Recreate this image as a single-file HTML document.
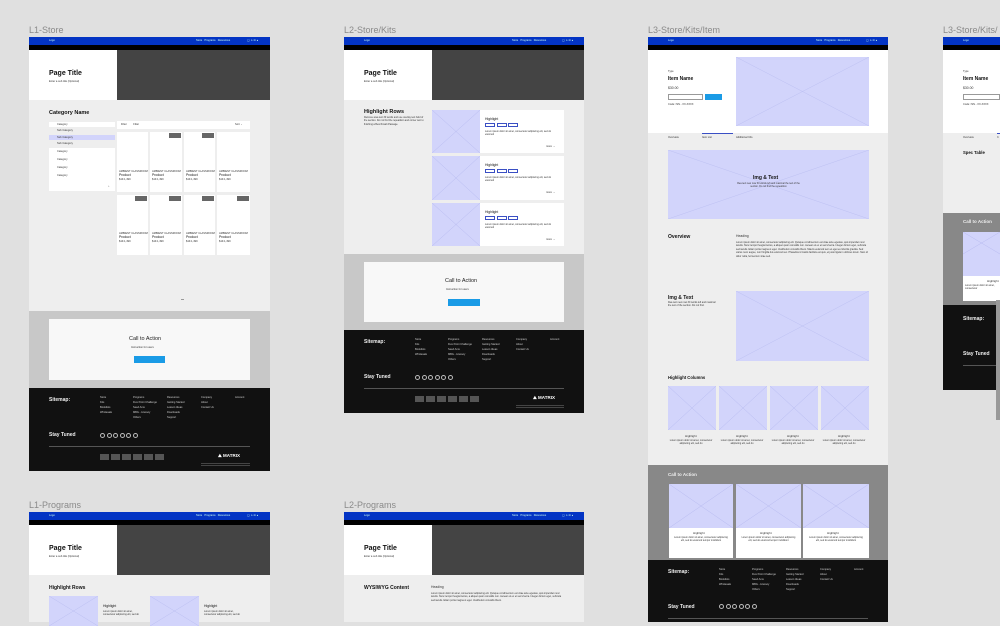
<!DOCTYPE html>
<html><head><meta charset="utf-8"><style>
*{margin:0;padding:0;box-sizing:border-box}
body{width:1000px;height:622px;overflow:hidden;background:#e0e0e0;position:relative;font-family:"Liberation Sans",sans-serif}
div,span{position:absolute}
.lbl{font-size:9px;color:#8a8a8a;white-space:nowrap}
.blue{background:#0334c4;height:8px}
.blk{background:#000;height:5px}
.dark{background:#444}
.w{background:#fff}
.lt{background:#eee}
.img{background:#d2d4fb;overflow:hidden}
.img svg{position:absolute;left:0;top:0;width:100%;height:100%}
.t{white-space:nowrap;color:#111}
.s{font-size:2.6px;color:#333;white-space:nowrap}
.p{font-size:2.4px;color:#333;line-height:3.4px;white-space:normal}
.f{font-size:2.6px;color:#ccc;white-space:nowrap;line-height:5px}
.nav{font-size:2.6px;color:#cfe;white-space:nowrap}
.circ{width:5px;height:5px;border:0.6px solid #bbb;border-radius:50%;top:0}
.tag{width:10px;height:4px;border:.5px solid #3a4fc4;top:13px}
</style></head><body>

<div class="lbl" style="left:29px;top:25px">L1-Store</div>
<div class="lbl" style="left:344px;top:25px">L2-Store/Kits</div>
<div class="lbl" style="left:648px;top:25px">L3-Store/Kits/Item</div>
<div class="lbl" style="left:943px;top:25px">L3-Store/Kits/</div>
<div class="lbl" style="left:29px;top:500px">L1-Programs</div>
<div class="lbl" style="left:344px;top:500px">L2-Programs</div>

<!-- L1-Store -->
<div class="blue" style="left:29px;top:37px;width:241px"><span class="nav" style="left:20px;top:2px">Logo</span><span class="nav" style="left:167px;top:2px">Store &nbsp; Programs &nbsp; Resources</span><span class="nav" style="left:218px;top:2px">◯ ♙ ⊟ ●</span></div>
<div class="blk" style="left:29px;top:45px;width:241px"></div>
<div class="w" style="left:29px;top:50px;width:88px;height:50px"><span class="t" style="left:20px;top:20px;font-size:7px;font-weight:bold">Page Title</span><span class="s" style="left:20px;top:30px">Enter a sub title (Optional)</span></div>
<div class="dark" style="left:117px;top:50px;width:153px;height:50px"></div>
<div class="lt" style="left:29px;top:100px;width:241px;height:211px">
 <span class="t" style="left:20px;top:10px;font-size:5.5px;font-weight:bold">Category Name</span>
 <div class="w" style="left:20px;top:22px;width:66px;height:5px"><span class="s" style="left:8px;top:1px">Category</span></div>
 <div class="s" style="left:28px;top:29px">Sub Category</div>
 <div style="left:20px;top:35px;width:66px;height:5px;background:#d2d4fb"><span class="s" style="left:8px;top:1px">Sub Category</span></div>
 <div class="s" style="left:28px;top:42px">Sub Category</div>
 <div class="w" style="left:20px;top:48px;width:66px;height:36px"><span class="s" style="left:8px;top:2px">Category</span><span class="s" style="left:8px;top:10px">Category</span><span class="s" style="left:8px;top:18px">Category</span><span class="s" style="left:8px;top:26px">Category</span></div>
 <div class="w" style="left:20px;top:84px;width:66px;height:7px"><span class="s" style="left:59px;top:1px">⌕</span></div>
 <div class="w" style="left:88px;top:21px;width:133px;height:8px"><span class="s" style="left:4px;top:2px">Filter &nbsp; &nbsp; &nbsp; &nbsp; Filter</span><span class="s" style="left:118px;top:2px">Sort ⌄</span></div>
 <div class="w" style="left:88px;top:32px;width:31px;height:60px"></div>
 <div class="w" style="left:121px;top:32px;width:32px;height:60px"><div style="left:19px;top:1px;width:12px;height:5px;background:#666"></div></div>
 <div class="w" style="left:155px;top:32px;width:31px;height:60px"><div style="left:18px;top:1px;width:12px;height:5px;background:#666"></div></div>
 <div class="w" style="left:188px;top:32px;width:33px;height:60px"></div>
 <div class="w" style="left:88px;top:95px;width:31px;height:60px"><div style="left:18px;top:1px;width:12px;height:5px;background:#666"></div></div>
 <div class="w" style="left:121px;top:95px;width:32px;height:60px"><div style="left:19px;top:1px;width:12px;height:5px;background:#666"></div></div>
 <div class="w" style="left:155px;top:95px;width:31px;height:60px"><div style="left:18px;top:1px;width:12px;height:5px;background:#666"></div></div>
 <div class="w" style="left:188px;top:95px;width:33px;height:60px"><div style="left:20px;top:1px;width:12px;height:5px;background:#666"></div></div>
 <div class="s" style="left:90px;top:70px">AMBIENT CLASSROOM</div><div class="t" style="left:90px;top:73px;font-size:3.4px">Product</div><div class="s" style="left:90px;top:78px">$19.1,499</div>
 <div class="s" style="left:123px;top:70px">AMBIENT CLASSROOM</div><div class="t" style="left:123px;top:73px;font-size:3.4px">Product</div><div class="s" style="left:123px;top:78px">$19.1,499</div>
 <div class="s" style="left:157px;top:70px">AMBIENT CLASSROOM</div><div class="t" style="left:157px;top:73px;font-size:3.4px">Product</div><div class="s" style="left:157px;top:78px">$19.1,499</div>
 <div class="s" style="left:190px;top:70px">AMBIENT CLASSROOM</div><div class="t" style="left:190px;top:73px;font-size:3.4px">Product</div><div class="s" style="left:190px;top:78px">$19.1,499</div>
 <div class="s" style="left:90px;top:132px">AMBIENT CLASSROOM</div><div class="t" style="left:90px;top:135px;font-size:3.4px">Product</div><div class="s" style="left:90px;top:140px">$19.1,499</div>
 <div class="s" style="left:123px;top:132px">AMBIENT CLASSROOM</div><div class="t" style="left:123px;top:135px;font-size:3.4px">Product</div><div class="s" style="left:123px;top:140px">$19.1,499</div>
 <div class="s" style="left:157px;top:132px">AMBIENT CLASSROOM</div><div class="t" style="left:157px;top:135px;font-size:3.4px">Product</div><div class="s" style="left:157px;top:140px">$19.1,499</div>
 <div class="s" style="left:190px;top:132px">AMBIENT CLASSROOM</div><div class="t" style="left:190px;top:135px;font-size:3.4px">Product</div><div class="s" style="left:190px;top:140px">$19.1,499</div>
 <div style="left:152px;top:199px;width:3px;height:1px;background:#999"></div>
</div>
<div style="left:29px;top:311px;width:241px;height:77px;background:#c8c8c8">
 <div style="left:20px;top:8px;width:201px;height:61px;background:#f8f8f8">
  <span class="t" style="left:80px;top:17px;font-size:5.5px;color:#222">Call to Action</span>
  <span class="s" style="left:82px;top:27px">Instruction for users</span>
  <div style="left:85px;top:37px;width:31px;height:7px;background:#1a9be6"></div>
 </div>
</div>
<div style="left:29px;top:388px;width:241px;height:83px;background:#111">
 <span class="t" style="left:20px;top:9px;font-size:5px;font-weight:bold;color:#eee">Sitemap:</span>
 <div class="f" style="left:71px;top:7px">Store<br>Kits<br>Booklists<br>Wholesale</div>
 <div class="f" style="left:104px;top:7px">Programs<br>Five Point Challenge<br>Seed Ams<br>MBG - Literacy<br>Others</div>
 <div class="f" style="left:138px;top:7px">Resources<br>Getting Started<br>Lesson Ideas<br>Downloads<br>Support</div>
 <div class="f" style="left:172px;top:7px">Company<br>About<br>Contact Us</div>
 <div class="f" style="left:206px;top:7px">Account</div>
 <span class="t" style="left:20px;top:44px;font-size:5px;font-weight:bold;color:#eee">Stay Tuned</span>
 <div style="left:71px;top:45px;width:45px;height:6px"><span class="circ" style="left:0"></span><span class="circ" style="left:6.5px"></span><span class="circ" style="left:13px"></span><span class="circ" style="left:19.5px"></span><span class="circ" style="left:26px"></span><span class="circ" style="left:32.5px"></span></div>
 <div style="left:20px;top:58px;width:201px;height:0.6px;background:#555"></div>
 <div style="left:71px;top:66px;width:66px;height:6px;background:repeating-linear-gradient(90deg,#555 0 9px,transparent 9px 11px)"></div>
 <span class="t" style="left:189px;top:65px;font-size:4.5px;font-weight:bold;color:#fff">⛰ MATRIX</span>
 <div style="left:172px;top:75px;width:49px;height:4px;background:repeating-linear-gradient(#444 0 1px,transparent 1px 2px)"></div>
</div>

<!-- L2-Store/Kits -->
<div class="blue" style="left:344px;top:37px;width:240px"><span class="nav" style="left:20px;top:2px">Logo</span><span class="nav" style="left:168px;top:2px">Store &nbsp; Programs &nbsp; Resources</span><span class="nav" style="left:218px;top:2px">◯ ♙ ⊟ ●</span></div>
<div class="blk" style="left:344px;top:45px;width:240px"></div>
<div class="w" style="left:344px;top:50px;width:88px;height:50px"><span class="t" style="left:20px;top:20px;font-size:7px;font-weight:bold">Page Title</span><span class="s" style="left:20px;top:30px">Enter a sub title (Optional)</span></div>
<div class="dark" style="left:432px;top:50px;width:152px;height:50px"></div>
<div class="lt" style="left:344px;top:100px;width:240px;height:154px">
 <span class="t" style="left:20px;top:9px;font-size:5.5px;font-weight:bold">Highlight Rows</span>
 <div class="p" style="left:20px;top:16px;width:62px">Remove area text 30 words and use overlay text bold of the section. Do not find the repeatition and corner text to finishing a Benchmark Passage.</div>
</div>
<div class="img" style="left:432px;top:110px;width:48px;height:43px"><svg viewBox="0 0 48 43" preserveAspectRatio="none"><path d="M0 0L48 43M48 0L0 43" stroke="#b8bbf0" stroke-width=".5"/></svg></div>
<div class="w" style="left:480px;top:110px;width:84px;height:43px"><span class="t" style="left:5px;top:7px;font-size:3.4px">Highlight</span><div class="tag" style="left:5px"></div><div class="tag" style="left:16.5px"></div><div class="tag" style="left:28px"></div><div class="p" style="left:5px;top:20px;width:72px">Lorem ipsum dolor sit amet, consectetur adipiscing elit, sed do eiusmod</div><span class="s" style="left:66px;top:35px">more →</span></div>
<div class="img" style="left:432px;top:156px;width:48px;height:44px"><svg viewBox="0 0 48 44" preserveAspectRatio="none"><path d="M0 0L48 44M48 0L0 44" stroke="#b8bbf0" stroke-width=".5"/></svg></div>
<div class="w" style="left:480px;top:156px;width:84px;height:44px"><span class="t" style="left:5px;top:7px;font-size:3.4px">Highlight</span><div class="tag" style="left:5px"></div><div class="tag" style="left:16.5px"></div><div class="tag" style="left:28px"></div><div class="p" style="left:5px;top:20px;width:72px">Lorem ipsum dolor sit amet, consectetur adipiscing elit, sed do eiusmod</div><span class="s" style="left:66px;top:35px">more →</span></div>
<div class="img" style="left:432px;top:203px;width:48px;height:43px"><svg viewBox="0 0 48 43" preserveAspectRatio="none"><path d="M0 0L48 43M48 0L0 43" stroke="#b8bbf0" stroke-width=".5"/></svg></div>
<div class="w" style="left:480px;top:203px;width:84px;height:43px"><span class="t" style="left:5px;top:7px;font-size:3.4px">Highlight</span><div class="tag" style="left:5px"></div><div class="tag" style="left:16.5px"></div><div class="tag" style="left:28px"></div><div class="p" style="left:5px;top:20px;width:72px">Lorem ipsum dolor sit amet, consectetur adipiscing elit, sed do eiusmod</div><span class="s" style="left:66px;top:35px">more →</span></div>
<div style="left:344px;top:254px;width:240px;height:76px;background:#c8c8c8">
 <div style="left:20px;top:8px;width:200px;height:60px;background:#f8f8f8">
  <span class="t" style="left:81px;top:16px;font-size:5.5px;color:#222">Call to Action</span>
  <span class="s" style="left:82px;top:26px">Instruction for users</span>
  <div style="left:84px;top:37px;width:32px;height:7px;background:#1a9be6"></div>
 </div>
</div>
<div style="left:344px;top:330px;width:240px;height:83px;background:#111">
 <span class="t" style="left:20px;top:9px;font-size:5px;font-weight:bold;color:#eee">Sitemap:</span>
 <div class="f" style="left:71px;top:7px">Store<br>Kits<br>Booklists<br>Wholesale</div>
 <div class="f" style="left:104px;top:7px">Programs<br>Five Point Challenge<br>Seed Ams<br>MBG - Literacy<br>Others</div>
 <div class="f" style="left:138px;top:7px">Resources<br>Getting Started<br>Lesson Ideas<br>Downloads<br>Support</div>
 <div class="f" style="left:172px;top:7px">Company<br>About<br>Contact Us</div>
 <div class="f" style="left:206px;top:7px">Account</div>
 <span class="t" style="left:20px;top:44px;font-size:5px;font-weight:bold;color:#eee">Stay Tuned</span>
 <div style="left:71px;top:45px;width:45px;height:6px"><span class="circ" style="left:0"></span><span class="circ" style="left:6.5px"></span><span class="circ" style="left:13px"></span><span class="circ" style="left:19.5px"></span><span class="circ" style="left:26px"></span><span class="circ" style="left:32.5px"></span></div>
 <div style="left:20px;top:58px;width:200px;height:0.6px;background:#555"></div>
 <div style="left:71px;top:66px;width:66px;height:6px;background:repeating-linear-gradient(90deg,#555 0 9px,transparent 9px 11px)"></div>
 <span class="t" style="left:189px;top:65px;font-size:4.5px;font-weight:bold;color:#fff">⛰ MATRIX</span>
 <div style="left:172px;top:75px;width:48px;height:4px;background:repeating-linear-gradient(#444 0 1px,transparent 1px 2px)"></div>
</div>

<!-- L3-Store/Kits/Item -->
<div class="blue" style="left:648px;top:37px;width:240px"><span class="nav" style="left:20px;top:2px">Logo</span><span class="nav" style="left:168px;top:2px">Store &nbsp; Programs &nbsp; Resources</span><span class="nav" style="left:218px;top:2px">◯ ♙ ⊟ ●</span></div>
<div class="blk" style="left:648px;top:45px;width:240px"></div>
<div class="w" style="left:648px;top:50px;width:240px;height:83px">
 <span class="s" style="left:20px;top:20px">Type</span>
 <span class="t" style="left:20px;top:26px;font-size:5px;font-weight:bold">Item Name</span>
 <span class="s" style="left:20px;top:36px;font-size:3.4px">$30.00</span>
 <div style="left:20px;top:44px;width:35px;height:6px;border:.5px solid #999"></div>
 <div style="left:57px;top:44px;width:17px;height:6px;background:#1a9be6"></div>
 <span class="s" style="left:20px;top:53px">Code: ISN - XX-XXXX</span>
 <div class="img" style="left:88px;top:7px;width:133px;height:69px"><svg viewBox="0 0 133 69" preserveAspectRatio="none"><path d="M0 0L133 69M133 0L0 69" stroke="#b8bbf0" stroke-width=".4"/></svg></div>
</div>
<div class="lt" style="left:648px;top:133px;width:240px;height:332px">
 <div style="left:54px;top:0;width:31px;height:1px;background:#3a4fc4"></div>
 <span class="s" style="left:20px;top:3px">Overview</span><span class="s" style="left:54px;top:3px">Item List</span><span class="s" style="left:88px;top:3px">Additional Info</span>
 <div class="img" style="left:20px;top:17px;width:201px;height:69px"><svg viewBox="0 0 201 69" preserveAspectRatio="none"><path d="M0 0L201 69M201 0L0 69" stroke="#b8bbf0" stroke-width=".4"/></svg>
  <span class="t" style="left:85px;top:25px;font-size:5px;font-weight:bold">Img &amp; Text</span>
  <div class="p" style="left:68px;top:32px;width:65px;text-align:center">Rea text new now 30 words left and maximal the text of the section. Do not find the repeatition</div></div>
 <span class="t" style="left:20px;top:101px;font-size:5px;font-weight:bold">Overview</span>
 <span class="s" style="left:88px;top:101px;font-size:3.4px">Heading</span>
 <div class="p" style="left:88px;top:108px;width:133px">Lorem ipsum dolor sit amet, consectetur adipiscing elit. Quisque condimentum est vitae ante egestas, quis imperdiet nunc iaculis. Nunc tempor feugiat lectus, a aliquet quam convallis non. Aenean ut ex et sed viverra. Integer dictum eget, vehicula sed iaculis. Etiam porta magna ut eget. Vestibulum convallis libero. Mauris euismod sem et eget eu lobortis gravida. Sed varius nunc augue, non fringilla dui euismod nec. Phasellus id mattis facilisis est quis, et justo ligula in ultricies lorem. Nam id dolor nulla, fermentum vitae sed.</div>
 <span class="t" style="left:20px;top:162px;font-size:5px;font-weight:bold">Img &amp; Text</span>
 <div class="p" style="left:20px;top:168px;width:50px">Rea text new now 30 words left and maximal the text of the section. Do not find.</div>
 <div class="img" style="left:88px;top:158px;width:133px;height:70px"><svg viewBox="0 0 133 70" preserveAspectRatio="none"><path d="M0 0L133 70M133 0L0 70" stroke="#b8bbf0" stroke-width=".4"/></svg></div>
 <span class="t" style="left:20px;top:242px;font-size:4.2px;font-weight:bold">Highlight Columns</span>
 <div class="img" style="left:20px;top:253px;width:48px;height:44px"><svg viewBox="0 0 48 44" preserveAspectRatio="none"><path d="M0 0L48 44M48 0L0 44" stroke="#b8bbf0" stroke-width=".5"/></svg></div>
 <div class="img" style="left:71px;top:253px;width:48px;height:44px"><svg viewBox="0 0 48 44" preserveAspectRatio="none"><path d="M0 0L48 44M48 0L0 44" stroke="#b8bbf0" stroke-width=".5"/></svg></div>
 <div class="img" style="left:122px;top:253px;width:48px;height:44px"><svg viewBox="0 0 48 44" preserveAspectRatio="none"><path d="M0 0L48 44M48 0L0 44" stroke="#b8bbf0" stroke-width=".5"/></svg></div>
 <div class="img" style="left:173px;top:253px;width:48px;height:44px"><svg viewBox="0 0 48 44" preserveAspectRatio="none"><path d="M0 0L48 44M48 0L0 44" stroke="#b8bbf0" stroke-width=".5"/></svg></div>
 <span class="s" style="left:37px;top:301px;font-size:3px">Highlight</span><span class="s" style="left:88px;top:301px;font-size:3px">Highlight</span><span class="s" style="left:139px;top:301px;font-size:3px">Highlight</span><span class="s" style="left:190px;top:301px;font-size:3px">Highlight</span>
 <div class="p" style="left:18px;top:306px;width:50px;text-align:center">Lorem ipsum dolor sit amet, consectetur adipiscing elit, sed do</div>
 <div class="p" style="left:69px;top:306px;width:50px;text-align:center">Lorem ipsum dolor sit amet, consectetur adipiscing elit, sed do</div>
 <div class="p" style="left:120px;top:306px;width:50px;text-align:center">Lorem ipsum dolor sit amet, consectetur adipiscing elit, sed do</div>
 <div class="p" style="left:171px;top:306px;width:50px;text-align:center">Lorem ipsum dolor sit amet, consectetur adipiscing elit, sed do</div>
</div>
<div style="left:648px;top:465px;width:240px;height:95px;background:#888">
 <span class="t" style="left:20px;top:7px;font-size:4.5px;font-weight:bold;color:#eee">Call to Action</span>
 <div class="img" style="left:21px;top:19px;width:64px;height:44px"><svg viewBox="0 0 64 44" preserveAspectRatio="none"><path d="M0 0L64 44M64 0L0 44" stroke="#b8bbf0" stroke-width=".5"/></svg></div>
 <div class="w" style="left:21px;top:63px;width:64px;height:30px"><span class="s" style="left:24px;top:3px;font-size:3px">Highlight</span><div class="p" style="left:5px;top:8px;width:54px;text-align:center">Lorem ipsum dolor sit amet, consectetur adipiscing elit, sed do eiusmod tempor incididunt</div></div>
 <div class="img" style="left:88px;top:19px;width:65px;height:44px"><svg viewBox="0 0 65 44" preserveAspectRatio="none"><path d="M0 0L65 44M65 0L0 44" stroke="#b8bbf0" stroke-width=".5"/></svg></div>
 <div class="w" style="left:88px;top:63px;width:65px;height:30px"><span class="s" style="left:24px;top:3px;font-size:3px">Highlight</span><div class="p" style="left:5px;top:8px;width:55px;text-align:center">Lorem ipsum dolor sit amet, consectetur adipiscing elit, sed do eiusmod tempor incididunt</div></div>
 <div class="img" style="left:155px;top:19px;width:66px;height:44px"><svg viewBox="0 0 66 44" preserveAspectRatio="none"><path d="M0 0L66 44M66 0L0 44" stroke="#b8bbf0" stroke-width=".5"/></svg></div>
 <div class="w" style="left:155px;top:63px;width:66px;height:30px"><span class="s" style="left:24px;top:3px;font-size:3px">Highlight</span><div class="p" style="left:5px;top:8px;width:56px;text-align:center">Lorem ipsum dolor sit amet, consectetur adipiscing elit, sed do eiusmod tempor incididunt</div></div>
</div>
<div style="left:648px;top:560px;width:240px;height:62px;background:#111">
 <span class="t" style="left:20px;top:9px;font-size:5px;font-weight:bold;color:#eee">Sitemap:</span>
 <div class="f" style="left:71px;top:7px">Store<br>Kits<br>Booklists<br>Wholesale</div>
 <div class="f" style="left:104px;top:7px">Programs<br>Five Point Challenge<br>Seed Ams<br>MBG - Literacy<br>Others</div>
 <div class="f" style="left:138px;top:7px">Resources<br>Getting Started<br>Lesson Ideas<br>Downloads<br>Support</div>
 <div class="f" style="left:172px;top:7px">Company<br>About<br>Contact Us</div>
 <div class="f" style="left:206px;top:7px">Account</div>
 <span class="t" style="left:20px;top:44px;font-size:5px;font-weight:bold;color:#eee">Stay Tuned</span>
 <div style="left:71px;top:44px;width:45px;height:6px"><span class="circ" style="left:0"></span><span class="circ" style="left:6.5px"></span><span class="circ" style="left:13px"></span><span class="circ" style="left:19.5px"></span><span class="circ" style="left:26px"></span><span class="circ" style="left:32.5px"></span></div>
 <div style="left:20px;top:58px;width:200px;height:0.6px;background:#555"></div>
</div>

<!-- L3 right (clipped) -->
<div class="blue" style="left:943px;top:37px;width:57px"><span class="nav" style="left:20px;top:2px">Logo</span></div>
<div class="blk" style="left:943px;top:45px;width:57px"></div>
<div class="w" style="left:943px;top:50px;width:57px;height:83px">
 <span class="s" style="left:20px;top:20px">Type</span>
 <span class="t" style="left:20px;top:26px;font-size:5px;font-weight:bold">Item Name</span>
 <span class="s" style="left:20px;top:36px;font-size:3.4px">$30.00</span>
 <div style="left:20px;top:44px;width:37px;height:6px;border:.5px solid #999"></div>
 <span class="s" style="left:20px;top:53px">Code: ISN - XX-XXXX</span>
</div>
<div class="lt" style="left:943px;top:133px;width:57px;height:80px">
 <div style="left:54px;top:0;width:3px;height:1px;background:#3a4fc4"></div>
 <span class="s" style="left:20px;top:3px">Overview</span><span class="s" style="left:54px;top:3px">It</span>
 <span class="t" style="left:20px;top:17px;font-size:4.2px;font-weight:bold">Spec Table</span>
</div>
<div style="left:943px;top:213px;width:57px;height:92px;background:#888">
 <span class="t" style="left:20px;top:6px;font-size:4.5px;font-weight:bold;color:#eee">Call to Action</span>
 <div class="img" style="left:20px;top:19px;width:37px;height:44px"><svg viewBox="0 0 37 44" preserveAspectRatio="none"><path d="M0 0L74 44M37 0L0 22" stroke="#b8bbf0" stroke-width=".5"/></svg></div>
 <div class="w" style="left:20px;top:63px;width:37px;height:25px"><span class="s" style="left:24px;top:3px;font-size:3px">Highlight</span><div class="p" style="left:2px;top:8px;width:40px">Lorem ipsum dolor sit amet, consectetur</div></div>
</div>
<div style="left:943px;top:305px;width:57px;height:85px;background:#111">
 <span class="t" style="left:20px;top:11px;font-size:5px;font-weight:bold;color:#eee">Sitemap:</span>
 <span class="t" style="left:20px;top:46px;font-size:5px;font-weight:bold;color:#eee">Stay Tuned</span>
 <div style="left:20px;top:60px;width:37px;height:0.6px;background:#555"></div>
</div>
<div style="left:996px;top:300px;width:4px;height:120px;background:#999"></div>

<!-- L1-Programs -->
<div class="blue" style="left:29px;top:512px;width:241px"><span class="nav" style="left:20px;top:2px">Logo</span><span class="nav" style="left:167px;top:2px">Store &nbsp; Programs &nbsp; Resources</span><span class="nav" style="left:218px;top:2px">◯ ♙ ⊟ ●</span></div>
<div class="blk" style="left:29px;top:520px;width:241px"></div>
<div class="w" style="left:29px;top:525px;width:88px;height:50px"><span class="t" style="left:20px;top:20px;font-size:7px;font-weight:bold">Page Title</span><span class="s" style="left:20px;top:30px">Enter a sub title (Optional)</span></div>
<div class="dark" style="left:117px;top:525px;width:153px;height:50px"></div>
<div class="lt" style="left:29px;top:575px;width:241px;height:47px">
 <span class="t" style="left:20px;top:10px;font-size:5px;font-weight:bold">Highlight Rows</span>
 <div class="img" style="left:20px;top:21px;width:49px;height:30px"><svg viewBox="0 0 49 44" preserveAspectRatio="none"><path d="M0 0L49 44M49 0L0 44" stroke="#b8bbf0" stroke-width=".5"/></svg></div>
 <span class="t" style="left:74px;top:29px;font-size:3.4px">Highlight</span>
 <div class="p" style="left:74px;top:35px;width:40px">Lorem ipsum dolor sit amet, consectetur adipiscing elit, sed do</div>
 <div class="img" style="left:121px;top:21px;width:49px;height:30px"><svg viewBox="0 0 49 44" preserveAspectRatio="none"><path d="M0 0L49 44M49 0L0 44" stroke="#b8bbf0" stroke-width=".5"/></svg></div>
 <span class="t" style="left:175px;top:29px;font-size:3.4px">Highlight</span>
 <div class="p" style="left:175px;top:35px;width:40px">Lorem ipsum dolor sit amet, consectetur adipiscing elit, sed do</div>
</div>

<!-- L2-Programs -->
<div class="blue" style="left:344px;top:512px;width:240px"><span class="nav" style="left:20px;top:2px">Logo</span><span class="nav" style="left:168px;top:2px">Store &nbsp; Programs &nbsp; Resources</span><span class="nav" style="left:218px;top:2px">◯ ♙ ⊟ ●</span></div>
<div class="blk" style="left:344px;top:520px;width:240px"></div>
<div class="w" style="left:344px;top:525px;width:88px;height:50px"><span class="t" style="left:20px;top:20px;font-size:7px;font-weight:bold">Page Title</span><span class="s" style="left:20px;top:30px">Enter a sub title (Optional)</span></div>
<div class="dark" style="left:432px;top:525px;width:152px;height:50px"></div>
<div class="lt" style="left:344px;top:575px;width:240px;height:47px">
 <span class="t" style="left:20px;top:10px;font-size:5px;font-weight:bold">WYSIWYG Content</span>
 <span class="s" style="left:87px;top:10px;font-size:3.4px">Heading</span>
 <div class="p" style="left:87px;top:17px;width:134px">Lorem ipsum dolor sit amet, consectetur adipiscing elit. Quisque condimentum est vitae ante egestas, quis imperdiet nunc iaculis. Nunc tempor feugiat lectus, a aliquet quam convallis non. Aenean ut ex et sed viverra. Integer dictum eget, vehicula sed iaculis. Etiam porta magna ut eget. Vestibulum convallis libero.</div>
</div>

</body></html>
